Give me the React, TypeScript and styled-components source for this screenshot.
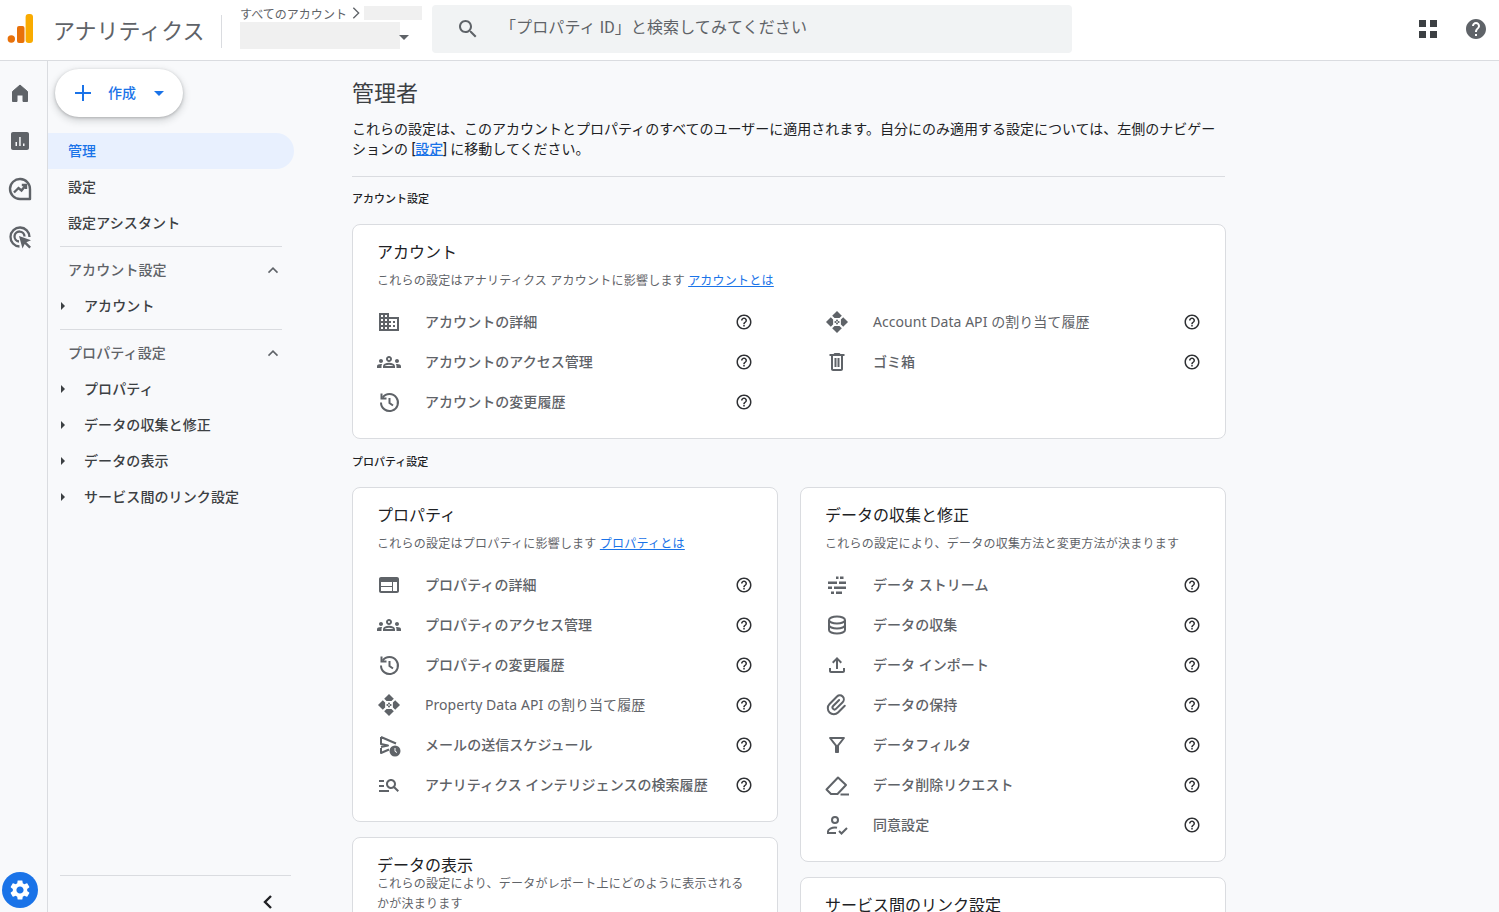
import React from "react";
import styled, { createGlobalStyle } from "styled-components";

const Global = createGlobalStyle`
  html, body { margin: 0; padding: 0; background: #f8f9fb; }
  body { font-family: Roboto, "Noto Sans CJK JP", sans-serif; overflow: hidden; }
  * { box-sizing: border-box; }
`;

const Page = styled.div`
  width: 1499px; height: 912px; overflow: hidden; display: flex; flex-direction: column; background: #f8f9fb;
`;
const Header = styled.header`
  height: 61px; flex: none; display: flex; align-items: flex-start; background: #fff; border-bottom: 1px solid #dadce0;
`;
const LogoSvg = styled.svg`
  width: 28px; height: 32px; margin: 13px 0 0 6px; flex: none;
`;
const Product = styled.div`
  margin: 15px 0 0 19px; width: 169px; height: 33px; line-height: 33px; font-size: 22px; color: #5f6368; border-right: 1px solid #dadce0; flex: none; white-space: nowrap;
`;
const AccountBox = styled.div`
  margin: 6px 0 0 18px; width: 192px; flex: none; display: flex; flex-direction: column; position: relative;
`;
const Crumb = styled.div`
  display: flex; align-items: center; height: 16px; padding-bottom: 2px; font-size: 12px; color: #5f6368; white-space: nowrap; letter-spacing: 0.03px;
`;
const CrumbArrow = styled.span`
  display: flex; margin-left: 1px;
`;
const Blank = styled.div<{ $w: number; $h: number }>`
  width: ${p => p.$w}px; height: ${p => p.$h}px; background: #f0f0f0; flex: none;
`;
const Caret = styled.span`
  position: absolute; left: 159px; top: 29px; width: 0; height: 0; border-left: 5px solid transparent; border-right: 5px solid transparent; border-top: 5px solid #5f6368;
`;
const SearchBox = styled.div`
  margin: 5px 0 0 0; width: 640px; height: 48px; background: #f1f3f4; border-radius: 4px; display: flex; align-items: center; padding-left: 24px; gap: 20px; flex: none; color: #5f6368;
`;
const Placeholder = styled.span`
  font-size: 16px; color: #5f6368; margin-top: -7px; letter-spacing: 0.1px;
`;
const HeaderRight = styled.div`
  margin: 17px 0 0 auto; display: flex; align-items: center; gap: 26px; padding-right: 11px; color: #5f6368;
`;
const Body = styled.div`
  flex: 1; display: flex; min-height: 0;
`;
const Rail = styled.nav`
  width: 48px; flex: none; border-right: 1px solid #dadce0; padding: 8px 0 4px 2px; display: flex; flex-direction: column; align-items: flex-start; background: #f8f9fb;
`;
const RailItem = styled.div`
  width: 36px; height: 48px; display: flex; align-items: center; justify-content: center; color: #5f6368;
`;
const GearBtn = styled.div`
  margin-top: auto; width: 36px; height: 36px; border-radius: 50%; background: #1a73e8; display: flex; align-items: center; justify-content: center; color: #fff;
`;
const Side = styled.aside`
  width: 304px; flex: none; display: flex; flex-direction: column;
`;
const CreateBtn = styled.button`
  margin: 8px 0 0 7px; width: 128px; height: 48px; border: 0; border-radius: 24px; background: #fff; box-shadow: 0 1px 3px rgba(60,64,67,.3), 0 3px 6px 2px rgba(60,64,67,.15); display: flex; align-items: center; padding: 0 0 0 19px; color: #1a73e8; font: 500 14px Roboto, "Noto Sans CJK JP", sans-serif;
`;
const CreateLabel = styled.span`
  margin: -2px 0 0 16px; width: 28px; white-space: nowrap;
`;
const CreateCaret = styled.span`
  margin-left: 18px; width: 0; height: 0; border-left: 5px solid transparent; border-right: 5px solid transparent; border-top: 5px solid #1a73e8;
`;
const NavList = styled.div`
  margin-top: 16px; display: flex; flex-direction: column;
`;
const NavItem = styled.div<{ $active?: boolean }>`
  width: 246px; height: 36px; display: flex; align-items: center; padding: 0 0 2px 20px; font-size: 14px; font-weight: 500; letter-spacing: 0.1px; border-radius: 0 18px 18px 0;
  color: ${p => (p.$active ? "#1a73e8" : "#3c4043")};
  background: ${p => (p.$active ? "#e8f0fe" : "transparent")};
`;
const NavRule = styled.div`
  width: 222px; height: 1px; margin: 5px 0 5px 12px; background: #dadce0; flex: none;
`;
const SectionHead = styled.div`
  width: 246px; height: 36px; display: flex; align-items: center; justify-content: space-between; padding: 0 12px 2px 20px; font-size: 14px; font-weight: 500; letter-spacing: 0.1px; color: #5f6368;
`;
const ChevronUp = styled.span`
  display: flex; margin-top: 2px;
`;
const SubItem = styled.div`
  height: 36px; display: flex; align-items: center; padding: 0 0 2px 13px; font-size: 14px; font-weight: 500; letter-spacing: 0.1px; color: #3c4043;
`;
const Tri = styled.span`
  width: 0; height: 0; margin: 2px 19px 0 0; border-top: 4px solid transparent; border-bottom: 4px solid transparent; border-left: 4px solid #3c4043;
`;
const SideFoot = styled.div`
  margin: auto 0 0 12px; width: 231px; height: 37px; border-top: 1px solid #dadce0; display: flex; justify-content: flex-end; align-items: flex-start; padding: 14px 11px 0 0; color: #202124;
`;
const Main = styled.main`
  width: 874px; flex: none; padding-top: 17px;
`;
const Title = styled.h1`
  margin: 0; font-size: 22px; line-height: 32px; font-weight: 400; color: #3c4043;
`;
const Desc = styled.p`
  margin: 9px 0 0; font-size: 14px; line-height: 20px; color: #202124; width: 873px;
`;
const DescLink = styled.a`
  color: #1a73e8; text-decoration: underline; font-weight: 500;
`;
const Rule = styled.div`
  height: 1px; background: #dadce0; margin: 17px 1px 0 0;
`;
const Label = styled.div<{ $top: number }>`
  margin: ${p => p.$top}px 0 16px; font-size: 11px; line-height: 16px; font-weight: 500; color: #202124;
`;
const Card = styled.section`
  background: #fff; border: 1px solid #dadce0; border-radius: 8px; padding: 16px 24px;
`;
const CardTitle = styled.h2`
  margin: 0; font-size: 16px; line-height: 24px; font-weight: 400; color: #202124;
`;
const CardSub = styled.p<{ $tight?: boolean }>`
  margin: ${p => (p.$tight ? "-4px" : "6px")} 0 0; font-size: 12px; line-height: 20px; letter-spacing: 0.24px; color: #5f6368;
`;
const CardLink = styled.a`
  color: #1a73e8; text-decoration: underline;
`;
const RowsTwoCol = styled.div`
  margin-top: 11px; display: grid; grid-template-columns: 376px 376px; column-gap: 72px;
`;
const Rows = styled.div`
  margin-top: 11px; display: flex; flex-direction: column;
`;
const RowStack = styled.div`
  display: flex; flex-direction: column;
`;
const RowEl = styled.div`
  height: 40px; display: flex; align-items: center; color: #5f6368;
`;
const RowLabel = styled.span<{ $latin?: boolean }>`
  margin: -2px 0 0 24px; flex: 1; font-size: 14px; font-weight: ${p => (p.$latin ? 400 : 500)}; letter-spacing: 0.05px; color: #5f6368; white-space: nowrap;
  font-family: ${p => (p.$latin ? `"Noto Sans", "Noto Sans CJK JP", sans-serif` : "inherit")};
`;
const HelpIcon = styled.span`
  width: 18px; height: 18px; flex: none; display: flex; color: #2f3134;
`;
const Columns = styled.div`
  display: flex; gap: 22px; align-items: flex-start;
`;
const Column = styled.div`
  width: 426px; flex: none; display: flex; flex-direction: column; gap: 15px;
`;
const Svg = styled.svg<{ $s?: number }>`
  width: ${p => p.$s ?? 24}px; height: ${p => p.$s ?? 24}px; flex: none; display: block;
`;
const Sq = styled.svg`
  width: 20px; height: 20px; display: block;
`;

const stroke = { fill: "none", stroke: "currentColor", strokeWidth: 2 } as const;

const icons: Record<string, React.ReactNode> = {
  search: <path fill="currentColor" d="M15.500 14h-.79l-.28-.27C15.410 12.590 16 11.110 16 9.500 16 5.910 13.090 3 9.500 3S3 5.910 3 9.500 5.910 16 9.500 16c1.610 0 3.090-.59 4.230-1.570l.27.28v.79l5 4.990L20.490 19l-4.990-5zm-6 0C7.010 14 5 11.990 5 9.500S7.010 5 9.500 5 14 7.010 14 9.500 11.990 14 9.500 14z" />,
  home: <path fill="currentColor" stroke="currentColor" strokeWidth="1" strokeLinejoin="round" d="M4.500 20.500V10.500L12 4l7.500 6.500v10h-4.500v-6.500H9v6.500z" />,
  report: <path fill="currentColor" d="M19 3H5c-1.100 0-2 .9-2 2v14c0 1.100.9 2 2 2h14c1.100 0 2-.9 2-2V5c0-1.100-.9-2-2-2zM9 17H7.500v-4H9v4zm3.700 0h-1.500V8h1.500v9zm3.800 0H15v-2.500h1.500V17z" />,
  explore: (
    <g fill="none" stroke="currentColor" strokeWidth="2.400">
      <path d="M22 12.500a10 10 0 1 0-10 9.500h10z" strokeLinejoin="round" />
      <path d="M6 15.500l4.500-4.500 3 2.500 4-5M13.800 8h4.200v4" />
    </g>
  ),
  target: (
    <g>
      <path fill="none" stroke="currentColor" strokeWidth="2.300" d="M11.500 21.500a9.500 9.500 0 1 1 10-9.500" />
      <path fill="none" stroke="currentColor" strokeWidth="2.300" d="M11 16.500a5 5 0 1 1 5.500-5" />
      <path fill="currentColor" d="M11 11l12 4.300-4.600 1.900 4.600 4.600-1.700 1.700-4.600-4.600L14.500 23.500z" />
    </g>
  ),
  domain: <path fill="currentColor" d="M12 7V3H2v18h20V7H12zM6 19H4v-2h2v2zm0-4H4v-2h2v2zm0-4H4V9h2v2zm0-4H4V5h2v2zm4 12H8v-2h2v2zm0-4H8v-2h2v2zm0-4H8V9h2v2zm0-4H8V5h2v2zm10 12h-8v-2h2v-2h-2v-2h2v-2h-2V9h8v10zm-2-8h-2v2h2v-2zm0 4h-2v2h2v-2z" />,
  groups: <path fill="currentColor" d="M4,13c1.1,0,2-0.9,2-2c0-1.1-0.9-2-2-2s-2,0.9-2,2C2,12.1,2.9,13,4,13z M5.13,14.1C4.76,14.04,4.39,14,4,14c-0.99,0-1.93,0.21-2.78,0.58C0.48,14.9,0,15.62,0,16.43V18l4.5,0v-1.61C4.5,15.56,4.73,14.78,5.13,14.1z M20,13c1.1,0,2-0.9,2-2c0-1.1-0.9-2-2-2s-2,0.9-2,2C18,12.1,18.9,13,20,13z M24,16.43c0-0.81-0.48-1.53-1.22-1.85C21.93,14.21,20.99,14,20,14c-0.39,0-0.76,0.04-1.13,0.1c0.4,0.68,0.63,1.46,0.63,2.29V18l4.5,0V16.43z M16.24,13.65c-1.17-0.52-2.61-0.9-4.24-0.9c-1.63,0-3.07,0.39-4.24,0.9C6.68,14.13,6,15.21,6,16.39V18h12v-1.61C18,15.21,17.32,14.13,16.24,13.65z M8.07,16c0.09-0.23,0.13-0.39,0.91-0.69c0.97-0.38,1.99-0.56,3.02-0.56s2.05,0.18,3.02,0.56c0.77,0.3,0.81,0.46,0.91,0.69H8.07z M12,8c0.55,0,1,0.45,1,1s-0.45,1-1,1s-1-0.45-1-1S11.45,8,12,8 M12,6c-1.66,0-3,1.34-3,3c0,1.66,1.34,3,3,3s3-1.34,3-3C15,7.34,13.66,6,12,6z" />,
  history: (
    <g {...stroke}>
      <path d="M5.600 7.600A8.500 8.500 0 1 1 4 12.500" />
      <path d="M4.500 3.500v5h5" />
      <path d="M12.500 8v5l3.500 2.500" />
    </g>
  ),
  api: (
    <g fill="currentColor">
      <path d="M12 1l4.800 4.800-2.300 2.300h-5L7.200 5.800z" />
      <path d="M12 23l4.800-4.800-2.300-2.300h-5l-2.300 2.300z" />
      <path d="M1 12l4.800-4.800 2.300 2.300v5l-2.300 2.300z" />
      <path d="M23 12l-4.800-4.800-2.300 2.300v5l2.300 2.300z" />
      <circle cx="12" cy="10.400" r="1" />
      <circle cx="12" cy="13.600" r="1" />
      <circle cx="10.400" cy="12" r="1" />
      <circle cx="13.600" cy="12" r="1" />
    </g>
  ),
  trash: <path fill="currentColor" d="M14.500 3h-5l-1 1H4.500v2H6v13c0 1.100.9 2 2 2h8c1.100 0 2-.9 2-2V6h1.500V4h-4zM16 19H8V6h8zM9.500 8h2v9h-2zm3 0h2v9h-2z" />,
  web: <path fill="currentColor" d="M20 4H4c-1.100 0-1.990.9-1.990 2L2 18c0 1.100.9 2 2 2h16c1.100 0 2-.9 2-2V6c0-1.100-.9-2-2-2zm-5 14H4v-4h11v4zm0-5H4V9h11v4zm5 5h-4V9h4v9z" />,
  mail: (
    <g>
      <path {...stroke} strokeLinejoin="round" d="M4 15v5l8-3.500M4 4v7l7 1.500-7 1.500M4 4l15 6.500" />
      <circle cx="18" cy="18" r="5.500" fill="currentColor" />
      <path d="M18 15v3.300l2 1.200" fill="none" stroke="#fff" strokeWidth="1" />
    </g>
  ),
  manage: <path fill="currentColor" d="M7 9H2V7h5v2zm0 3H2v2h5v-2zm13.590 7-3.830-3.830c-.8.520-1.740.830-2.760.830-2.760 0-5-2.240-5-5s2.240-5 5-5 5 2.240 5 5c0 1.020-.31 1.960-.83 2.750L22 17.590 20.590 19zM17 11c0-1.650-1.350-3-3-3s-3 1.350-3 3 1.350 3 3 3 3-1.350 3-3zM2 19h10v-2H2v2z" />,
  stream: (
    <g fill="currentColor">
      <rect x="11" y="3.500" width="2.500" height="2.500" />
      <rect x="15" y="3.500" width="3.500" height="2.500" />
      <rect x="3" y="8.500" width="9" height="2.500" />
      <rect x="14" y="8.500" width="7" height="2.500" />
      <rect x="3" y="13.500" width="4" height="2.500" />
      <rect x="9" y="13.500" width="12" height="2.500" />
      <rect x="6" y="18.500" width="3" height="2.500" />
      <rect x="11" y="18.500" width="6" height="2.500" />
    </g>
  ),
  db: (
    <g {...stroke}>
      <path d="M4 7c0-2 3.600-3.500 8-3.500s8 1.500 8 3.500v10c0 2-3.600 3.500-8 3.500S4 19 4 17z" />
      <path d="M4 7c0 2 3.600 3.500 8 3.500s8-1.500 8-3.500" />
      <path d="M4 12c0 2 3.600 3.500 8 3.500s8-1.500 8-3.500" />
    </g>
  ),
  upload: <path fill="currentColor" d="M18 15v3H6v-3H4v3c0 1.100.9 2 2 2h12c1.100 0 2-.9 2-2v-3h-2zM7 9l1.410 1.410L11 7.830V16h2V7.830l2.590 2.580L17 9l-5-5-5 5z" />,
  clip: <path {...stroke} strokeLinecap="round" transform="rotate(45 12 12)" d="M18 7v9.500a6 6 0 0 1-12 0V6a4 4 0 0 1 8 0v9.500a2 2 0 0 1-4 0V7" />,
  filter: <path fill="currentColor" d="M7 6h10l-5.010 6.300L7 6zm-2.750-.39C6.270 8.200 10 13 10 13v6c0 .55.45 1 1 1h2c.55 0 1-.45 1-1v-6s3.720-4.800 5.740-7.390C20.250 4.950 19.780 4 18.950 4H5.040c-.83 0-1.300.95-.79 1.610z" />,
  eraser: (
    <g {...stroke} strokeLinejoin="round">
      <path d="M1.500 16.500L13 4.500l8 7.500-8.500 9H6z" />
      <path d="M15.500 21.500H24" />
    </g>
  ),
  consent: (
    <g {...stroke}>
      <circle cx="10" cy="7" r="3" />
      <path d="M12 14.800c-.7-.2-1.300-.3-2-.3-3 0-7 1.500-7 3.800V20h8" />
      <path d="M14 18l2.500 2.500L22 15" />
    </g>
  ),
};

const Icon = ({ name, s }: { name: string; s?: number }) => (
  <Svg $s={s} viewBox="0 0 24 24">{icons[name]}</Svg>
);

const HelpGlyph = () => (
  <Svg $s={18} viewBox="0 0 24 24">
    <path fill="currentColor" d="M11 18h2v-2h-2v2zm1-16C6.480 2 2 6.480 2 12s4.480 10 10 10 10-4.480 10-10S17.520 2 12 2zm0 18c-4.410 0-8-3.590-8-8s3.590-8 8-8 8 3.590 8 8-3.590 8-8 8zm0-14c-2.210 0-4 1.790-4 4h2c0-1.100.9-2 2-2s2 .9 2 2c0 2-3 1.750-3 5h2c0-2.250 3-2.500 3-5 0-2.210-1.790-4-4-4z" />
  </Svg>
);

const Row = ({ icon, label }: { icon: string; label: string }) => (
  <RowEl>
    <Icon name={icon} />
    <RowLabel $latin={icon === "api"}>{label}</RowLabel>
    <HelpIcon><HelpGlyph /></HelpIcon>
  </RowEl>
);

const Up = () => (
  <ChevronUp>
    <Svg $s={18} viewBox="0 0 24 24"><path d="M6 15.500l6-6 6 6" fill="none" stroke="#5f6368" strokeWidth="2" /></Svg>
  </ChevronUp>
);

const propertyRows = [
  ["web", "プロパティの詳細"],
  ["groups", "プロパティのアクセス管理"],
  ["history", "プロパティの変更履歴"],
  ["api", "Property Data API の割り当て履歴"],
  ["mail", "メールの送信スケジュール"],
  ["manage", "アナリティクス インテリジェンスの検索履歴"],
];
const dataRows = [
  ["stream", "データ ストリーム"],
  ["db", "データの収集"],
  ["upload", "データ インポート"],
  ["clip", "データの保持"],
  ["filter", "データフィルタ"],
  ["eraser", "データ削除リクエスト"],
  ["consent", "同意設定"],
];

export default function App() {
  return (
    <Page>
      <Global />
      <Header>
        <LogoSvg viewBox="0 0 28 32">
          <circle cx="5.300" cy="26" r="3.700" fill="#e8710a" />
          <rect x="11" y="13" width="7.500" height="17" rx="2" fill="#e8710a" />
          <rect x="19.600" y="1" width="7.400" height="29" rx="3" fill="#f9ab00" />
        </LogoSvg>
        <Product>アナリティクス</Product>
        <AccountBox>
          <Crumb>
            すべてのアカウント
            <CrumbArrow>
              <Svg $s={16} viewBox="0 0 24 24"><path d="M8 4l8 8-8 8" fill="none" stroke="#5f6368" strokeWidth="2" /></Svg>
            </CrumbArrow>
            <Blank $w={58} $h={14} />
          </Crumb>
          <Blank $w={160} $h={27} />
          <Caret />
        </AccountBox>
        <SearchBox>
          <Icon name="search" />
          <Placeholder>「プロパティ ID」と検索してみてください</Placeholder>
        </SearchBox>
        <HeaderRight>
          <Sq viewBox="0 0 20 20">
            <g fill="#3c4043">
              <rect x="1" y="1" width="7" height="7" />
              <rect x="12" y="1" width="7" height="7" />
              <rect x="1" y="12" width="7" height="7" />
              <rect x="12" y="12" width="7" height="7" />
            </g>
          </Sq>
          <Svg viewBox="0 0 24 24">
            <path fill="currentColor" d="M12 2C6.480 2 2 6.480 2 12s4.480 10 10 10 10-4.480 10-10S17.520 2 12 2zm1 17h-2v-2h2v2zm2.070-7.750l-.9.920C13.450 12.900 13 13.500 13 15h-2v-.5c0-1.100.45-2.100 1.170-2.830l1.240-1.260c.37-.36.59-.86.59-1.410 0-1.100-.9-2-2-2s-2 .9-2 2H8c0-2.210 1.790-4 4-4s4 1.790 4 4c0 .88-.36 1.680-.93 2.250z" />
          </Svg>
        </HeaderRight>
      </Header>
      <Body>
        <Rail>
          <RailItem><Icon name="home" /></RailItem>
          <RailItem><Icon name="report" /></RailItem>
          <RailItem><Icon name="explore" /></RailItem>
          <RailItem><Icon name="target" /></RailItem>
          <GearBtn>
            <Svg viewBox="0 0 24 24">
              <path fill="currentColor" d="M19.140 12.940c.04-.3.06-.61.06-.94 0-.32-.02-.64-.07-.94l2.030-1.580c.18-.14.23-.41.120-.61l-1.920-3.320c-.12-.22-.37-.29-.59-.22l-2.390.96c-.5-.38-1.030-.7-1.620-.94l-.36-2.540c-.04-.24-.24-.41-.48-.41h-3.840c-.24 0-.43.17-.47.41l-.36 2.540c-.59.24-1.130.57-1.620.94l-2.390-.96c-.22-.08-.47 0-.59.22L2.740 8.870c-.12.21-.08.47.12.61l2.030 1.580c-.05.3-.09.63-.09.94s.02.64.07.94l-2.030 1.580c-.18.14-.23.41-.12.61l1.920 3.320c.12.22.37.29.59.22l2.390-.96c.5.38 1.030.7 1.620.94l.36 2.540c.05.24.24.41.48.41h3.840c.24 0 .44-.17.47-.41l.36-2.540c.59-.24 1.130-.56 1.620-.94l2.390.96c.22.08.47 0 .59-.22l1.920-3.320c.12-.22.07-.47-.12-.61l-2.010-1.580zM12 15.600c-1.980 0-3.600-1.620-3.600-3.600s1.620-3.600 3.600-3.600 3.600 1.620 3.600 3.600-1.620 3.600-3.600 3.600z" />
            </Svg>
          </GearBtn>
        </Rail>
        <Side>
          <CreateBtn>
            <Svg viewBox="0 0 18 18" $s={18}><path d="M9 1v16M1 9h16" stroke="currentColor" strokeWidth="2" fill="none" /></Svg>
            <CreateLabel>作成</CreateLabel>
            <CreateCaret />
          </CreateBtn>
          <NavList>
            <NavItem $active>管理</NavItem>
            <NavItem>設定</NavItem>
            <NavItem>設定アシスタント</NavItem>
          </NavList>
          <NavRule />
          <SectionHead>アカウント設定<Up /></SectionHead>
          <SubItem><Tri />アカウント</SubItem>
          <NavRule />
          <SectionHead>プロパティ設定<Up /></SectionHead>
          <SubItem><Tri />プロパティ</SubItem>
          <SubItem><Tri />データの収集と修正</SubItem>
          <SubItem><Tri />データの表示</SubItem>
          <SubItem><Tri />サービス間のリンク設定</SubItem>
          <SideFoot>
            <Svg viewBox="0 0 24 24"><path d="M15 6l-6 6 6 6" fill="none" stroke="currentColor" strokeWidth="2.400" /></Svg>
          </SideFoot>
        </Side>
        <Main>
          <Title>管理者</Title>
          <Desc>
            これらの設定は、このアカウントとプロパティのすべてのユーザーに適用されます。自分にのみ適用する設定については、左側のナビゲーションの [<DescLink>設定</DescLink>] に移動してください。
          </Desc>
          <Rule />
          <Label $top={15}>アカウント設定</Label>
          <Card>
            <CardTitle>アカウント</CardTitle>
            <CardSub>これらの設定はアナリティクス アカウントに影響します <CardLink>アカウントとは</CardLink></CardSub>
            <RowsTwoCol>
              <RowStack>
                <Row icon="domain" label="アカウントの詳細" />
                <Row icon="groups" label="アカウントのアクセス管理" />
                <Row icon="history" label="アカウントの変更履歴" />
              </RowStack>
              <RowStack>
                <Row icon="api" label="Account Data API の割り当て履歴" />
                <Row icon="trash" label="ゴミ箱" />
              </RowStack>
            </RowsTwoCol>
          </Card>
          <Label $top={16}>プロパティ設定</Label>
          <Columns>
            <Column>
              <Card>
                <CardTitle>プロパティ</CardTitle>
                <CardSub>これらの設定はプロパティに影響します <CardLink>プロパティとは</CardLink></CardSub>
                <Rows>{propertyRows.map(([i, l]) => <Row key={l} icon={i} label={l} />)}</Rows>
              </Card>
              <Card>
                <CardTitle>データの表示</CardTitle>
                <CardSub $tight>これらの設定により、データがレポート上にどのように表示されるかが決まります</CardSub>
              </Card>
            </Column>
            <Column>
              <Card>
                <CardTitle>データの収集と修正</CardTitle>
                <CardSub>これらの設定により、データの収集方法と変更方法が決まります</CardSub>
                <Rows>{dataRows.map(([i, l]) => <Row key={l} icon={i} label={l} />)}</Rows>
              </Card>
              <Card>
                <CardTitle>サービス間のリンク設定</CardTitle>
              </Card>
            </Column>
          </Columns>
        </Main>
      </Body>
    </Page>
  );
}
